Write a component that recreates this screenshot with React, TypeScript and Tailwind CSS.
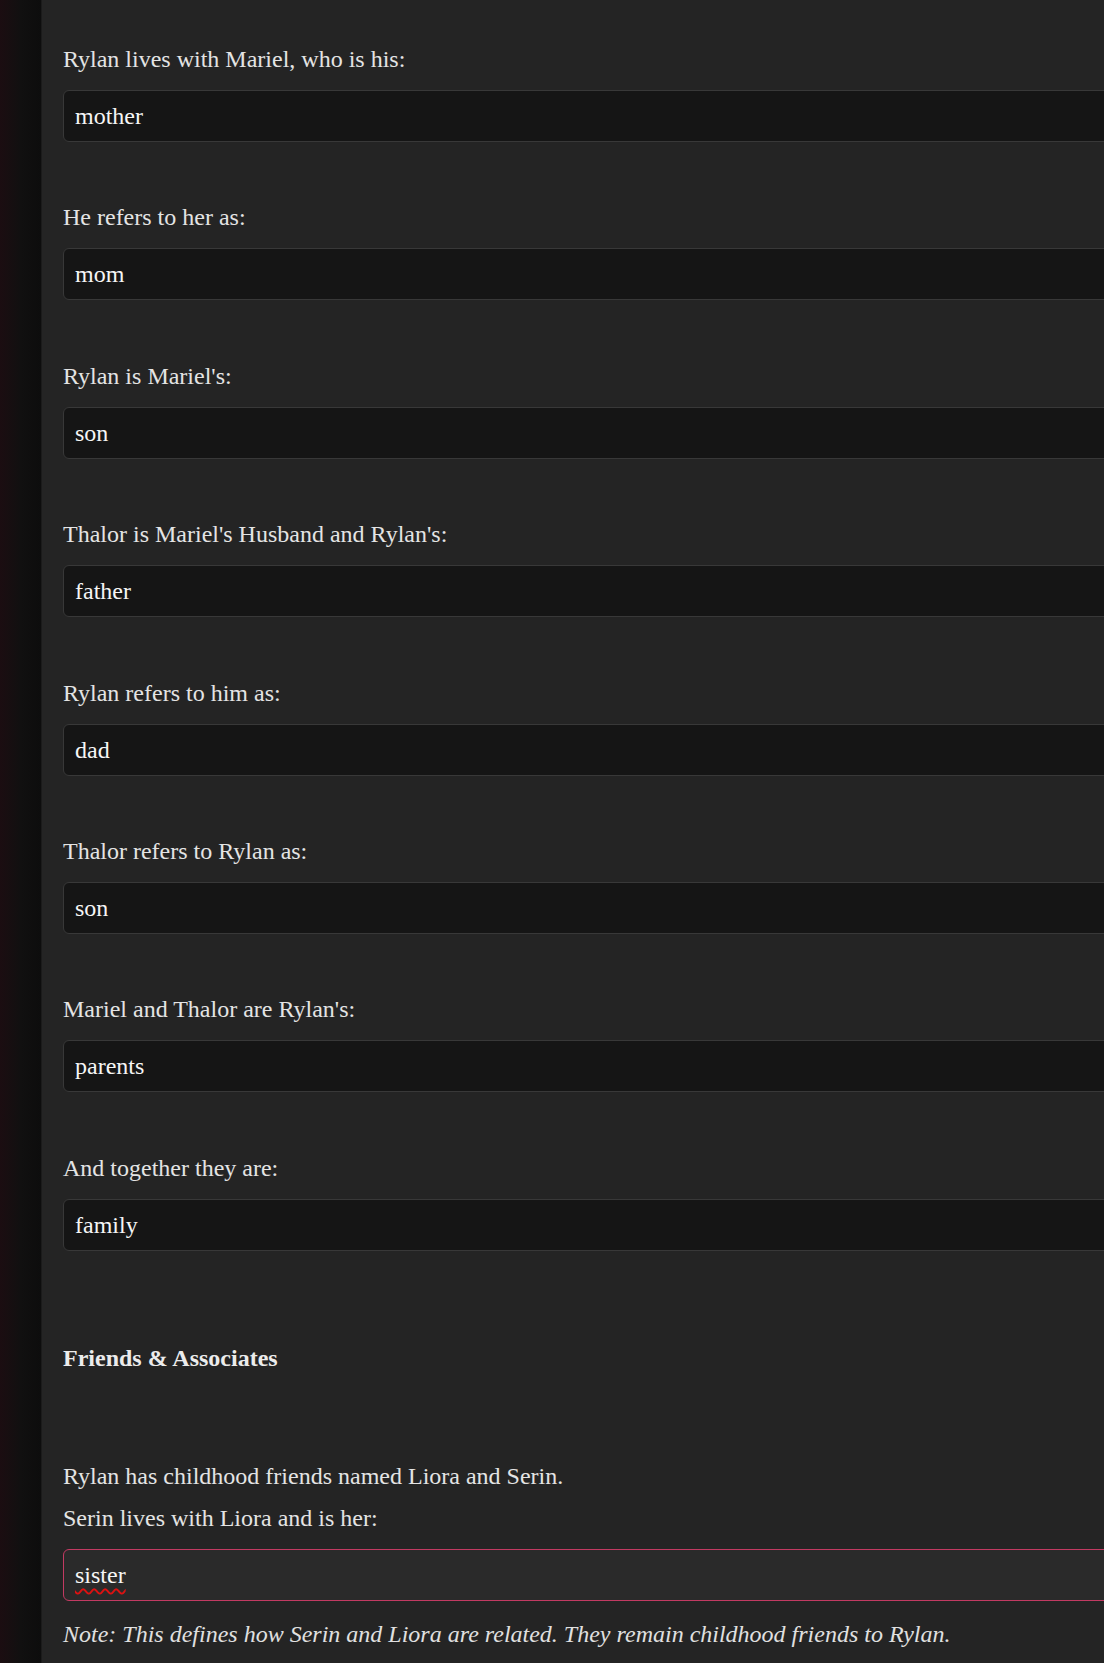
const fields = [
  { label: "Rylan lives with Mariel, who is his:", value: "mother" },
  { label: "He refers to her as:", value: "mom" },
  { label: "Rylan is Mariel's:", value: "son" },
  { label: "Thalor is Mariel's Husband and Rylan's:", value: "father" },
  { label: "Rylan refers to him as:", value: "dad" },
  { label: "Thalor refers to Rylan as:", value: "son" },
  { label: "Mariel and Thalor are Rylan's:", value: "parents" },
  { label: "And together they are:", value: "family" },
];

function Field({ label, value }: { label: string; value: string }) {
  return (
    <div className="mb-[61.4px]">
      <label className="block h-[28px] leading-[28px] mb-[17px] text-[#e4e4e4]">{label}</label>
      <div className="w-[1200px] h-[52px] flex items-center px-[11px] bg-[#151515] border border-[#383838] rounded-[6px] text-[#f6f6f6]">
        {value}
      </div>
    </div>
  );
}

export default function App() {
  return (
    <div className="flex w-full h-[1663px] overflow-hidden bg-[#242424] text-[24px] font-['Liberation_Serif','Times_New_Roman',serif]">
      {/* Side strip */}
      <div className="w-[42px] shrink-0 bg-gradient-to-r from-[#1b0d11] via-[#111010] to-[#0d0d0d] border-r border-[#1b1b1b]" />

      {/* Form panel */}
      <div className="flex-1 min-w-0 pl-[21px] pt-[45px]">
        {fields.map((f, i) => (
          <Field key={i} label={f.label} value={f.value} />
        ))}

        {/* margin collapses with the last field's bottom margin */}
        <h3 className="mt-[93px] h-[28px] leading-[28px] font-bold text-[#ececec]">Friends &amp; Associates</h3>

        <p className="mt-[90px] h-[28px] leading-[28px] text-[#e4e4e4]">Rylan has childhood friends named Liora and Serin.</p>
        <label className="block mt-[14px] h-[28px] leading-[28px] mb-[17px] text-[#e4e4e4]">Serin lives with Liora and is her:</label>
        <div className="w-[1200px] h-[52px] flex items-center px-[11px] bg-[#2a2a2a] border border-[#c23a62] rounded-[6px] text-[#f6f6f6]">
          <span className="underline decoration-wavy decoration-[#d11] decoration-[1.5px] underline-offset-[5px]">sister</span>
        </div>
        <p className="mt-[19px] h-[28px] leading-[28px] italic text-[#e0e0e0]">
          Note: This defines how Serin and Liora are related. They remain childhood friends to Rylan.
        </p>
      </div>
    </div>
  );
}
